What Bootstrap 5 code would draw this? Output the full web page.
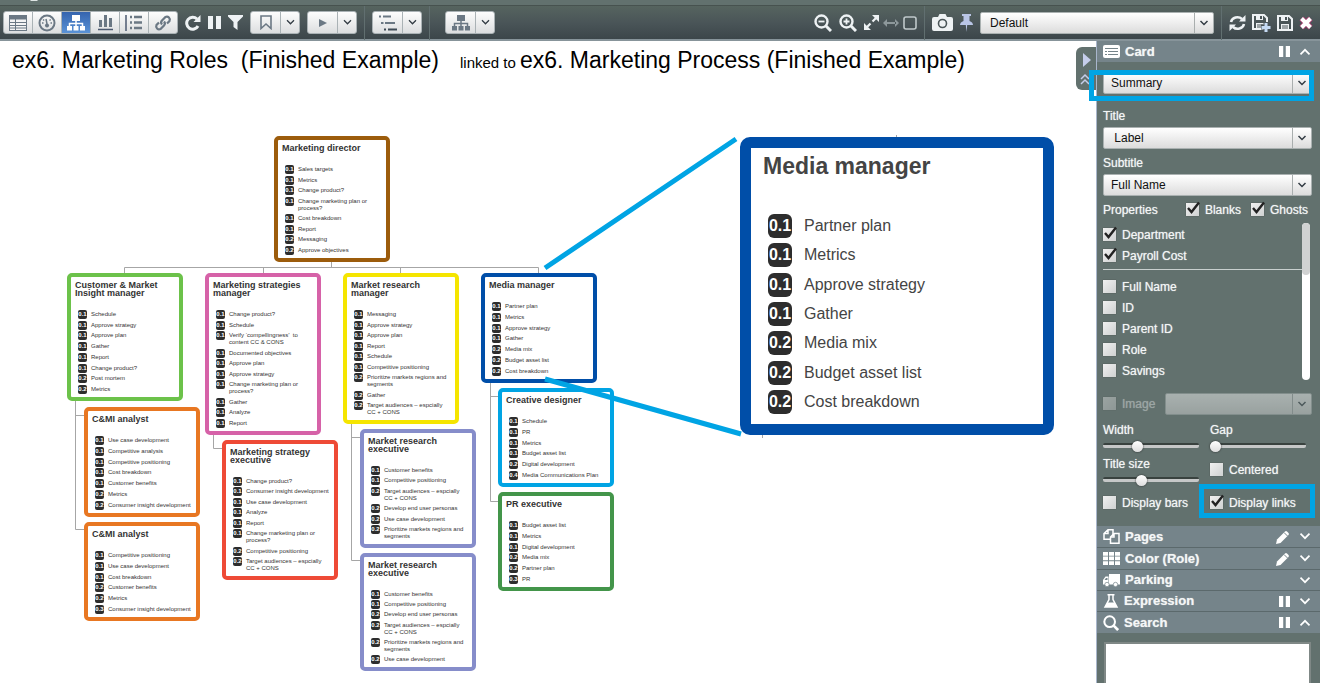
<!DOCTYPE html>
<html lang="en">
<head>
<meta charset="utf-8">
<meta name="viewport" content="width=device-width, initial-scale=1">
<title>Marketing Roles</title>
<link href="https://cdn.jsdelivr.net/npm/bootstrap@5.3.0/dist/css/bootstrap.min.css" rel="stylesheet">
<style>
body{font-family:"Liberation Sans",Arial,sans-serif;font-size:12px;line-height:18px;color:#111;background:#fff}
svg{display:block}
button{color:inherit}
.topstrip{height:12px;margin-bottom:-7px;background:#62716e;padding-left:30px}
.toolbar{position:relative;height:36px;background:linear-gradient(#56645f,#4a5558 50%,#3c464a);border-top:1px solid #47524f;border-bottom:2px solid #87949a;gap:7px;padding:0 7px 0 3px;color:#eef2f4}
.toolgroup{border:1px solid #aab2b5;border-radius:3px;overflow:hidden;height:23px;background:#aab2b5;gap:1px}
.toolgroup .btn{width:28px;padding:0;border:0;border-radius:0;background:linear-gradient(#fdfdfd,#dcdedf);color:#6b7884;display:flex;align-items:center;justify-content:center}
.toolgroup .btn.active{background:linear-gradient(#3564ae,#5a92d6);color:#fff}
.toolgroup .btn.main-part{width:29px}
.toolgroup .btn.caret-part{width:18px;color:#333c44}
.bare{padding:0;border:0;background:none;display:block;flex:none}
.vline{width:1px;height:34px;background:#616f70}
.filegroup{gap:6px}
.picker{appearance:none;height:22px;width:100%;border:1px solid #aab1b1;border-radius:2px;padding:0 24px 0 7px;font-size:12px;line-height:18px;color:#111;
 background:url("data:image/svg+xml,%3Csvg xmlns='http://www.w3.org/2000/svg' width='20' height='22'%3E%3Cpath d='M1.5 0v22' stroke='%23a9aeae'/%3E%3Cpath d='M7.5 9l3.5 3.500 3.500-3.500' fill='none' stroke='%23333c44' stroke-width='1.500'/%3E%3C/svg%3E") right center no-repeat,linear-gradient(#fff,#dcdcdc)}
.picker:disabled{opacity:.45}
.toolbar .picker{width:234px;padding-left:9px}
.side{width:224px;background:#62716e;color:#f4f6f6;border-left:1px solid #a9b6cc;text-shadow:0 0 1px #cfd6d5}
.secthead{height:21px;background:#75848a;padding:0 9px 0 6px;font-size:13px;font-weight:bold;line-height:20px;gap:5px}
.secthead + .secthead{border-top:1px solid #5b696c}
.secthead.tall{height:22px}
.secthead .bare{color:#fff}
.panelbody{padding:10px 8px 13px 6px}
.fieldgap{margin-bottom:13px}
.panelbody .picker.under{margin:2px 0 5px}
.panelbody .picker.closing{margin:2px 0 3px}
.tick{appearance:none;position:relative;width:13px;height:13px;margin:0;flex:none;background:linear-gradient(135deg,#f0f0f0,#cfd1d1);box-shadow:0 0 1px #444}
.tick:checked::after{content:"";position:absolute;left:1px;top:-2px;width:14px;height:14px;background:url("data:image/svg+xml,%3Csvg xmlns='http://www.w3.org/2000/svg' viewBox='0 0 14 14'%3E%3Cpath d='M1 7l3.500 4L12 1.500' fill='none' stroke='%23222' stroke-width='2.400'/%3E%3C/svg%3E")}
.tick:disabled,.tick:disabled + label{opacity:.4}
.checkrow{height:21px;gap:6px}
.proplist{position:relative;height:157px;padding-top:1px;margin:3px 0 13px}
.proplist .rule{height:1px;background:#c9d0cf;margin:3px 9px 6px 0}
.rail{position:absolute;right:2px;top:0;width:8px;height:100%;border-radius:4px;background:#fff}
.rail span{display:block;height:52px;border-radius:4px;background:#d0d2d2}
.slide{appearance:none;display:block;width:96px;height:11px;margin:1px 0 4px;background:none}
.slide::-webkit-slider-runnable-track{height:5px;border-radius:2px;background:#c6c8c8;border-top:2px solid #39423f}
.slide::-webkit-slider-thumb{appearance:none;width:11px;height:11px;margin-top:-4px;border-radius:50%;background:linear-gradient(#fff,#ddd);box-shadow:0 0 2px #222}
.twocol{column-gap:11px}
.sliders{margin-top:7px}
.displays{margin-top:3px}
.halfcol{width:96px}
.marker{position:absolute;border:5px solid #00a4e4;pointer-events:none}
.marker.on-view{inset:-2px -2px -7px -14px}
.marker.on-links{inset:-8px -3px -5px -11px}
.searchbox{display:block;width:207px;height:41px;margin:9px 7px 0;border:2px solid #7f8886;border-bottom:0;border-radius:0;resize:none;background:#fff}
.stage{position:relative;min-width:0}
.doctitle{font-size:23px;line-height:30px;padding:4px 0 0 12px;white-space:pre}
.doctitle a{color:#000;text-decoration:none}
.doctitle .first{min-width:448px}
.doctitle .joiner{font-size:15px;width:60px}
.sidetab{position:absolute;right:0;top:6px;width:20px;height:43px;border-radius:6px 0 0 6px;background:#62716e;color:#c5cdea}
.wires,.callout{position:absolute;left:0;top:0;pointer-events:none}
.orgnode{position:absolute;width:116px;border:4px solid;border-radius:5px;background:#fff;padding:3px 0 4px 4px;color:#333;display:flex;flex-direction:column}
.orgnode h2{font-size:9px;line-height:8px;font-weight:bold;margin:1px 0 14px;white-space:pre-line;color:#333}
.orgnode ul{flex:1;list-style:none;margin:0;padding:0 0 0 3px;display:flex;flex-direction:column;justify-content:space-between}
.orgnode li{display:flex;gap:4px;font-size:6px;line-height:7px;white-space:pre}
.score{flex:none;width:9px;height:9px;margin:-1px 0;border-radius:2px;background:#2d2d2d;color:#fff;font-size:6px;line-height:9px;font-weight:bold;text-align:center}
.orgnode.zoomed{width:314px;border-width:11px;border-radius:10px;padding:5px 0 11px 12px;color:#444}
.orgnode.zoomed h2{font-size:23px;line-height:26px;margin:0 0 36px;color:#444}
.orgnode.zoomed ul{padding-left:5px}
.orgnode.zoomed li{font-size:16px;line-height:22px;gap:12px}
.orgnode.zoomed .score{width:24px;height:24px;border-radius:6px;font-size:16px;line-height:24px}
</style>
</head>
<body>
<svg width="0" height="0" class="position-absolute" aria-hidden="true">
 <symbol id="chev" viewBox="0 0 10 8"><path d="M1 1.500l4 4 4-4" fill="none" stroke="currentColor" stroke-width="1.500"/></symbol>
 <symbol id="chevup" viewBox="0 0 10 8"><path d="M1 6.500l4-4 4 4" fill="none" stroke="currentColor" stroke-width="1.500"/></symbol>
 <symbol id="pause" viewBox="0 0 13 13"><path d="M0 0h5v13H0zM8 0h5v13H8z" fill="currentColor"/></symbol>
 <symbol id="pencil" viewBox="0 0 14 14"><path d="M1 9.500L9 1.500a1.500 1.500 0 0 1 2 0L12.500 3a1.500 1.500 0 0 1 0 2L4.500 13 0 14z" fill="currentColor"/><path d="M8 2.500L11.500 6" stroke="#75848a"/></symbol>
 <symbol id="tree" viewBox="0 0 18 16"><path d="M5 0h8v6H5zM0 11h5v4.500H0zM6.500 11h5v4.500h-5zM13 11h5v4.500h-5z" fill="currentColor"/><path d="M9 6v5M2.500 11V8.500h13V11" fill="none" stroke="currentColor" stroke-width="1.500"/></symbol>
 <symbol id="disk" viewBox="0 0 16 16"><path d="M1 1h11l3 3v11H1z" fill="none" stroke="currentColor" stroke-width="2"/><path d="M4 1h7v5H4zM4 9h8v6H4z" fill="currentColor"/><path d="M8 2h2v3H8z" fill="#4a5558"/><path d="M5 11h6M5 13h6" stroke="#4a5558"/></symbol>
</svg>

<div class="topstrip"><svg width="8" height="2"><path d="M0 0h8l-1 1H1z" fill="#dfe5e4"/></svg></div>
<header class="toolbar d-flex align-items-center">
 <div class="toolgroup d-flex" role="group" aria-label="Views">
  <button class="btn" aria-label="Table"><svg width="18" height="16" viewBox="0 0 18 16"><path d="M0 0h18v16H0z" fill="currentColor"/><path d="M1 4.500h5V7H1zM1 8h5v2H1zM1 11h5v1.500H1zM1 13.500h5V15H1zM7 4.500h10V7H7zM7 8h10v2H7zM7 11h10v1.500H7zM7 13.500h10V15H7z" fill="#f4f4f4"/></svg></button>
  <button class="btn" aria-label="Dashboard"><svg width="18" height="18" viewBox="0 0 18 18"><circle cx="9" cy="9" r="7.500" fill="none" stroke="currentColor" stroke-width="2"/><circle cx="9" cy="11.500" r="2" fill="currentColor"/><path d="M9 10L8 5" stroke="currentColor" stroke-width="1.500"/><path d="M4 9h1.500M12.500 9H14M5 5.500l1.200 1M11.500 6.500l1.200-1" stroke="currentColor" stroke-width="1.500"/></svg></button>
  <button class="btn active" aria-label="Org chart"><svg width="18" height="16"><use href="#tree"/></svg></button>
  <button class="btn" aria-label="Bar chart"><svg width="17" height="17" viewBox="0 0 17 17"><path d="M2 6h3v7H2zM7 1h3v12H7zM12 4h3v9h-3z" fill="currentColor"/><path d="M1 15.500h15" stroke="#4c5a70" stroke-width="1.500"/></svg></button>
  <button class="btn" aria-label="List"><svg width="18" height="16" viewBox="0 0 18 16"><path d="M1 0v16" stroke="#4c5a70" stroke-width="1.500"/><path d="M5 2h2M5 7.500h2M5 13h2M9 2h8M9 7.500h8M9 13h8" stroke="currentColor" stroke-width="2.500"/></svg></button>
  <button class="btn" aria-label="Link"><svg width="18" height="18" viewBox="0 0 18 18" fill="none" stroke="currentColor" stroke-width="2.200"><path d="M8 10.500a3 3 0 0 1 0-4l3.500-3.500a3 3 0 0 1 4 4L13 9.500"/><path d="M10 7.500a3 3 0 0 1 0 4L6.500 15a3 3 0 0 1-4-4L5 8.500"/></svg></button>
 </div>
 <button class="bare" aria-label="Refresh"><svg width="16" height="16" viewBox="0 0 16 16"><path d="M13 11A6 6 0 1 1 12 4" fill="none" stroke="currentColor" stroke-width="3"/><path d="M15.500 0v7H8.500z" fill="currentColor"/></svg></button>
 <button class="bare" aria-label="Pause"><svg width="13" height="13"><use href="#pause"/></svg></button>
 <button class="bare" aria-label="Filter"><svg width="15" height="15" viewBox="0 0 15 15"><path d="M0 0h15v1.500L9.500 7v8L5.500 12V7L0 1.500z" fill="currentColor"/></svg></button>
 <div class="toolgroup d-flex"><button class="btn main-part" aria-label="Bookmark"><svg width="12" height="15" viewBox="0 0 12 15"><path d="M1 1h10v12.500L6 9l-5 4.500z" fill="none" stroke="currentColor" stroke-width="1.600"/></svg></button><button class="btn caret-part" aria-label="Bookmarks"><svg width="9" height="7"><use href="#chev"/></svg></button></div>
 <div class="toolgroup d-flex"><button class="btn main-part" aria-label="Play"><svg width="8" height="10"><path d="M0 1l8 4-8 4z" fill="currentColor"/></svg></button><button class="btn caret-part" aria-label="Play options"><svg width="9" height="7"><use href="#chev"/></svg></button></div>
 <div class="vline"></div>
 <div class="toolgroup d-flex"><button class="btn main-part" aria-label="Levels"><svg width="18" height="16" viewBox="0 0 18 16" stroke-width="2"><path d="M0 1.500h2M4 1.500h8" stroke="currentColor"/><path d="M2 8h2.500M6 8h10" stroke="currentColor"/><path d="M5 14.500h2M9 14.500h9" stroke="#3e4a55"/></svg></button><button class="btn caret-part" aria-label="Level options"><svg width="9" height="7"><use href="#chev"/></svg></button></div>
 <div class="vline"></div>
 <div class="toolgroup d-flex ms-2"><button class="btn main-part" aria-label="Layout"><svg width="18" height="16"><use href="#tree"/></svg></button><button class="btn caret-part" aria-label="Layout options"><svg width="9" height="7"><use href="#chev"/></svg></button></div>

 <button class="bare ms-auto" aria-label="Zoom out"><svg width="18" height="18" viewBox="0 0 18 18" fill="none" stroke="currentColor"><circle cx="7.500" cy="7.500" r="6" stroke-width="2.400"/><path d="M12 12l5 5" stroke-width="3"/><path d="M4.500 7.500h6" stroke-width="1.800"/></svg></button>
 <button class="bare" aria-label="Zoom in"><svg width="18" height="18" viewBox="0 0 18 18" fill="none" stroke="currentColor"><circle cx="7.500" cy="7.500" r="6" stroke-width="2.400"/><path d="M12 12l5 5" stroke-width="3"/><path d="M4.500 7.500h6M7.500 4.500v6" stroke-width="1.800"/></svg></button>
 <div class="d-flex align-items-center gap-1">
  <button class="bare" aria-label="Fit"><svg width="15" height="15" viewBox="0 0 15 15"><path d="M8 0h7v7zM0 8v7h7z" fill="currentColor"/><path d="M3 12l3.500-3.500M8.500 6.500L12 3" stroke="currentColor" stroke-width="2.200"/></svg></button>
  <button class="bare" aria-label="Fit width"><svg width="16" height="10" viewBox="0 0 16 10" fill="#8d989b"><path d="M0 5l4-4v8zM16 5l-4-4v8zM3 4h10v2H3z"/></svg></button>
  <button class="bare" aria-label="Actual size"><svg width="14" height="14" viewBox="0 0 14 14"><rect x="1" y="1" width="12" height="12" rx="2" fill="none" stroke="#bfc8ca" stroke-width="1.600"/></svg></button>
 </div>
 <div class="vline"></div>
 <button class="bare" aria-label="Snapshot"><svg width="21" height="17" viewBox="0 0 21 17"><path d="M2 3h4l1.500-3h6L15 3h4a2 2 0 0 1 2 2v10a2 2 0 0 1-2 2H2a2 2 0 0 1-2-2V5a2 2 0 0 1 2-2z" fill="currentColor"/><circle cx="10.500" cy="9.500" r="4" fill="none" stroke="#4a5558" stroke-width="1.600"/></svg></button>
 <button class="bare" aria-label="Pin"><svg width="13" height="18" viewBox="0 0 13 18"><path d="M2 0h9v2H9.500v5c2 .8 3.500 2 3.500 4H0c0-2 1.500-3.200 3.500-4V2H2zM5.800 11h1.400L6.500 18z" fill="#b9c5e6"/></svg></button>
 <select class="picker" aria-label="Preset"><option>Default</option></select>
 <div class="vline"></div>
 <div class="filegroup d-flex align-items-center">
  <button class="bare" aria-label="Sync"><svg width="17" height="16" viewBox="0 0 17 16"><path d="M2 7a6.500 6 0 0 1 11-3M15 9a6.500 6 0 0 1-11 3" fill="none" stroke="currentColor" stroke-width="2.500"/><path d="M16.500 0v6.500H10zM.5 16V9.500H7z" fill="currentColor"/></svg></button>
  <button class="bare" aria-label="Save as"><svg width="19" height="18" viewBox="0 0 19 18"><use href="#disk" width="16" height="16"/><path d="M14 8v10M9 13h10" stroke="#4a5558" stroke-width="5"/><path d="M14 9v9M9.500 13.500h9" stroke="#c5daf4" stroke-width="3"/></svg></button>
  <button class="bare" aria-label="Save"><svg width="16" height="16"><use href="#disk"/></svg></button>
  <button class="bare" aria-label="Delete"><svg width="14" height="14" viewBox="0 0 14 14"><path d="M2.500 2.500l9 9M11.500 2.500l-9 9" stroke="#a3386b" stroke-width="5.800"/><path d="M2.500 2.500l9 9M11.500 2.500l-9 9" stroke="#fff" stroke-width="4"/></svg></button>
 </div>
</header>

<div class="d-flex">
 <main class="stage flex-grow-1">
  <h1 class="doctitle d-flex m-0 fw-normal text-black align-items-baseline"><a class="first" href="#roles">ex6. Marketing Roles&nbsp; (Finished Example)</a><span class="joiner">linked to</span><a href="#process">ex6. Marketing Process (Finished Example)</a></h1>
  <svg class="wires" width="1096" height="642" viewBox="0 41 1096 642" fill="none" stroke="#a6a6a6"><path d="M124.500 273v-5.500h414v5.500M263.500 267v6M400.500 267v6M331.500 262v5M75.500 401v128.500h9M75.500 415.500h9M213.500 434v14.500h9M351.500 423v137.500h9M351.500 437.500h9M490.500 382v119.500h8M490.500 396.500h8M896.500 135v3M762.500 434v4"/></svg>
  <div id="chart"></div>
  <svg class="callout" width="1096" height="642" viewBox="0 41 1096 642" stroke="#00a4e4" stroke-width="5"><path d="M545 268L736 139M545 379L741 434"/></svg>
  <button class="bare sidetab" aria-label="Collapse panel"><svg width="20" height="43"><path d="M7 6l8 7-8 7z" fill="currentColor"/><path d="M5 32l4-4 4 4M5 37l4-4 4 4" fill="none" stroke="currentColor" stroke-width="1.500"/></svg></button>
 </main>

 <aside class="side flex-shrink-0">
  <div class="secthead d-flex align-items-center"><svg width="17" height="13" viewBox="0 0 17 13"><rect width="17" height="13" rx="2" fill="#fff"/><path d="M2 3.500h13M2 6.500h2M5 6.500h10M2 9.500h2M5 9.500h10" stroke="#75848a" stroke-width="1.200"/></svg><span>Card</span>
   <button class="bare ms-auto" aria-label="Pause card"><svg width="11" height="11"><use href="#pause"/></svg></button><button class="bare ms-1" aria-label="Collapse card"><svg width="12" height="9"><use href="#chevup"/></svg></button></div>
  <div class="panelbody">
   <div class="position-relative fieldgap"><select class="picker d-block" aria-label="Card view"><option>Summary</option></select><div class="marker on-view"></div></div>
   <label class="d-block" for="f-title">Title</label>
   <select class="picker under d-block" id="f-title"><option>&nbsp;Label</option></select>
   <label class="d-block" for="f-sub">Subtitle</label>
   <select class="picker closing d-block" id="f-sub"><option>Full Name</option></select>
   <div class="checkrow d-flex align-items-center">
    <span class="me-auto">Properties</span>
    <input class="tick" type="checkbox" id="c-bl" checked><label for="c-bl">Blanks</label>
    <input class="tick ms-1" type="checkbox" id="c-gh" checked><label for="c-gh" class="me-1">Ghosts</label>
   </div>
   <div class="proplist">
    <div class="checkrow d-flex align-items-center"><input class="tick" type="checkbox" id="p1" checked><label for="p1">Department</label></div>
    <div class="checkrow d-flex align-items-center"><input class="tick" type="checkbox" id="p2" checked><label for="p2">Payroll Cost</label></div>
    <div class="rule"></div>
    <div class="checkrow d-flex align-items-center"><input class="tick" type="checkbox" id="p3"><label for="p3">Full Name</label></div>
    <div class="checkrow d-flex align-items-center"><input class="tick" type="checkbox" id="p4"><label for="p4">ID</label></div>
    <div class="checkrow d-flex align-items-center"><input class="tick" type="checkbox" id="p5"><label for="p5">Parent ID</label></div>
    <div class="checkrow d-flex align-items-center"><input class="tick" type="checkbox" id="p6"><label for="p6">Role</label></div>
    <div class="checkrow d-flex align-items-center"><input class="tick" type="checkbox" id="p7"><label for="p7">Savings</label></div>
    <div class="rail"><span></span></div>
   </div>
   <div class="checkrow d-flex align-items-center"><input class="tick" type="checkbox" id="c-im" disabled><label for="c-im">Image</label><select class="picker ms-1" aria-label="Image field" disabled><option></option></select></div>
   <div class="twocol sliders d-flex">
    <div class="halfcol">
     <label class="d-block" for="r-w">Width</label><input class="slide" type="range" id="r-w" value="34">
     <label class="d-block" for="r-t">Title size</label><input class="slide" type="range" id="r-t" value="39">
    </div>
    <div class="halfcol">
     <label class="d-block" for="r-g">Gap</label><input class="slide" type="range" id="r-g" value="0">
     <div class="checkrow d-flex align-items-center mt-2"><input class="tick" type="checkbox" id="c-ce"><label for="c-ce">Centered</label></div>
    </div>
   </div>
   <div class="twocol displays d-flex">
    <div class="halfcol checkrow d-flex align-items-center text-nowrap"><input class="tick" type="checkbox" id="c-db"><label for="c-db">Display bars</label></div>
    <div class="flex-grow-1 position-relative checkrow d-flex align-items-center text-nowrap"><input class="tick" type="checkbox" id="c-dl" checked><label for="c-dl">Display links</label><div class="marker on-links"></div></div>
   </div>
  </div>
  <div class="secthead d-flex align-items-center"><svg width="17" height="15" viewBox="0 0 17 15" fill="#75848a" stroke="#fff" stroke-width="1.500"><path d="M5 .8h5v9.500H1V4.500zM5 .8v3.700H1"/><path d="M11 4.500h5v9.700H7.500V8zM11 4.500V8H7.500"/></svg><span>Pages</span><button class="bare ms-auto" aria-label="Edit pages"><svg width="14" height="14"><use href="#pencil"/></svg></button><button class="bare ms-1" aria-label="Expand pages"><svg width="12" height="9"><use href="#chev"/></svg></button></div>
  <div class="secthead tall d-flex align-items-center"><svg width="17" height="13" viewBox="0 0 17 13" fill="#fff"><path d="M0 0h5v3.700H0zM6 0h5v3.700H6zM12 0h5v3.700h-5zM0 4.600h5v3.700H0zM6 4.600h5v3.700H6zM12 4.600h5v3.700h-5zM0 9.300h5V13H0zM6 9.300h5V13H6zM12 9.300h5V13h-5z"/></svg><span>Color (Role)</span><button class="bare ms-auto" aria-label="Edit colours"><svg width="14" height="14"><use href="#pencil"/></svg></button><button class="bare ms-1" aria-label="Expand colours"><svg width="12" height="9"><use href="#chev"/></svg></button></div>
  <div class="secthead d-flex align-items-center"><svg width="17" height="13" viewBox="0 0 17 13"><path d="M6 0h11v10.500H6zM5.500 2.500v8H0V6l2.500-3.500z" fill="#fff"/><path d="M1.500 6l1.500-2h1.500v2z" fill="#75848a"/><circle cx="4" cy="10.500" r="2.200" fill="#fff" stroke="#75848a" stroke-width=".7"/><circle cx="12.500" cy="10.500" r="2.200" fill="#fff" stroke="#75848a" stroke-width=".7"/></svg><span>Parking</span><button class="bare ms-auto" aria-label="Expand parking"><svg width="12" height="9"><use href="#chev"/></svg></button></div>
  <div class="secthead d-flex align-items-center"><svg width="16" height="14" viewBox="0 0 16 14"><path d="M6 1v4.500L2 13h12l-4-7.500V1" fill="none" stroke="#fff" stroke-width="1.500"/><path d="M4.500 0h7v1.500h-7zM4.500 8.500h7L14 13H2z" fill="#fff"/></svg><span>Expression</span><button class="bare ms-auto" aria-label="Pause expression"><svg width="11" height="11"><use href="#pause"/></svg></button><button class="bare ms-1" aria-label="Expand expression"><svg width="12" height="9"><use href="#chev"/></svg></button></div>
  <div class="secthead tall d-flex align-items-center"><svg width="16" height="16" viewBox="0 0 18 18" fill="none" stroke="#fff"><circle cx="7.500" cy="7.500" r="6" stroke-width="2.300"/><path d="M12 12l5 5" stroke-width="3"/></svg><span>Search</span><button class="bare ms-auto" aria-label="Pause search"><svg width="11" height="11"><use href="#pause"/></svg></button><button class="bare ms-1" aria-label="Collapse search"><svg width="12" height="9"><use href="#chevup"/></svg></button></div>
  <textarea class="searchbox" aria-label="Search"></textarea>
 </aside>
</div>

<script src="https://cdn.jsdelivr.net/npm/bootstrap@5.3.0/dist/js/bootstrap.bundle.min.js"></script>
<script>
// x, y, height, colour, title, tasks as "score text"
const nodes = [
 [274,95,126,'#9c5c0c','Marketing director',['0.1 Sales targets','0.1 Metrics','0.1 Change product?','0.1 Change marketing plan or\nprocess?','0.1 Cost breakdown','0.1 Report','0.2 Messaging','0.2 Approve objectives']],
 [67,232,128,'#6cc24a','Customer & Market\nInsight manager',['0.1 Schedule','0.1 Approve strategy','0.1 Approve plan','0.1 Gather','0.1 Report','0.1 Change product?','0.2 Post mortem','0.2 Metrics']],
 [205,232,162,'#d662a8','Marketing strategies\nmanager',['0.1 Change product?','0.1 Schedule','0.1 Verify ‘compellingness’  to\ncontent CC & CONS','0.1 Documented objectives','0.1 Approve plan','0.1 Approve strategy','0.1 Change marketing plan or\nprocess?','0.1 Gather','0.1 Analyze','0.1 Report']],
 [343,232,151,'#f5e500','Market research\nmanager',['0.1 Messaging','0.1 Approve strategy','0.1 Approve plan','0.1 Report','0.1 Schedule','0.1 Competitive positioning','0.2 Prioritize markets regions and\nsegments','0.2 Gather','0.2 Target audiences – espcially\nCC + CONS']],
 [481,232,110,'#004ea8','Media manager',['0.1 Partner plan','0.1 Metrics','0.1 Approve strategy','0.1 Gather','0.2 Media mix','0.2 Budget asset list','0.2 Cost breakdown']],
 [84,366,110,'#e87722','C&MI analyst',['0.1 Use case development','0.1 Competitive analysis','0.1 Competitive positioning','0.1 Cost breakdown','0.1 Customer benefits','0.2 Metrics','0.2 Consumer insight development']],
 [84,481,99,'#e87722','C&MI analyst',['0.1 Competitive positioning','0.1 Use case development','0.1 Cost breakdown','0.2 Customer benefits','0.2 Metrics','0.3 Consumer insight development']],
 [222,399,140,'#ee4a36','Marketing strategy\nexecutive',['0.1 Change product?','0.1 Consumer insight development','0.1 Use case development','0.1 Analyze','0.1 Report','0.1 Change marketing plan or\nprocess?','0.2 Competitive positioning','0.2 Target audiences – espcially\nCC + CONS']],
 [360,388,119,'#868dca','Market research\nexecutive',['0.1 Customer benefits','0.1 Competitive positioning','0.2 Target audiences – espcially\nCC + CONS','0.2 Develop end user personas','0.2 Use case development','0.2 Prioritize markets regions and\nsegments']],
 [360,512,118,'#868dca','Market research\nexecutive',['0.1 Customer benefits','0.1 Competitive positioning','0.2 Develop end user personas','0.2 Target audiences – espcially\nCC + CONS','0.2 Prioritize markets regions and\nsegments','0.2 Use case development']],
 [498,347,99,'#00a4e4','Creative designer',['0.1 Schedule','0.1 PR','0.1 Metrics','0.1 Budget asset list','0.2 Digital development','0.4 Media Communications Plan']],
 [498,451,99,'#43954a','PR executive',['0.1 Budget asset list','0.1 Metrics','0.1 Digital development','0.2 Media mix','0.2 Partner plan','0.3 PR']],
 [740,96,298,'#004ea8','Media manager',['0.1 Partner plan','0.1 Metrics','0.1 Approve strategy','0.1 Gather','0.2 Media mix','0.2 Budget asset list','0.2 Cost breakdown'],'zoomed']
];
const chart = document.getElementById('chart');
for (const [x, y, h, colour, title, tasks, extra] of nodes) {
 const card = document.createElement('article');
 card.className = 'orgnode' + (extra ? ' ' + extra : '');
 card.style.cssText = `left:${x}px;top:${y}px;height:${h}px;border-color:${colour}`;
 const head = document.createElement('h2');
 head.textContent = title;
 const list = document.createElement('ul');
 for (const task of tasks) {
  const row = document.createElement('li');
  const score = document.createElement('span');
  score.className = 'score';
  score.textContent = task.slice(0, 3);
  const label = document.createElement('span');
  label.textContent = task.slice(4);
  row.append(score, label);
  list.append(row);
 }
 card.append(head, list);
 chart.append(card);
}
</script>
</body>
</html>
